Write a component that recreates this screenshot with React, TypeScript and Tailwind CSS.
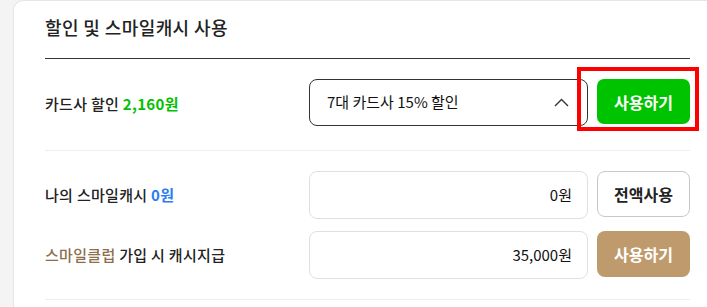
import React from "react";

const font = { fontFamily: '"Noto Sans CJK KR", "Noto Sans", sans-serif' };

export default function App() {
  return (
    <div
      className="relative w-[707px] h-[307px] overflow-hidden bg-[#f4f4f4] pl-[13px]"
      style={font}
    >
      <div className="h-full bg-white border-l border-t border-[#e6e6e6] rounded-tl-[10px] pl-[31px] pr-[17px]">
        <div className="h-[58px] border-b border-[#333333] flex items-center">
          <h2 className="text-[18px] font-medium text-[#222222] tracking-[0.4px] -mt-[4px]">
            할인 및 스마일캐시 사용
          </h2>
        </div>

        <div className="flex items-start justify-between pt-[20px] pb-[24px] border-b border-[#eeeeee]">
          <div className="h-[47px] flex items-center text-[15px] font-medium text-[#222222] tracking-[0.3px] pt-[3px]">
            <span>
              카드사 할인 <span className="font-bold text-[#00c200]">2,160원</span>
            </span>
          </div>
          <div className="flex items-start gap-[9px]">
            <div className="w-[279px] h-[47px] rounded-[8px] border border-[#333333] flex items-center justify-between pl-[17px] pr-[18px]">
              <span className="text-[15px] text-[#111111]">7대 카드사 15% 할인</span>
              <svg width="15" height="9" viewBox="0 0 15 9" fill="none">
                <path d="M1 8 L7.5 1.5 L14 8" stroke="#333" strokeWidth="1.4" />
              </svg>
            </div>
            <button className="w-[93px] h-[45px] rounded-[7px] bg-[#00c300] text-white text-[16px] font-bold">
              사용하기
            </button>
          </div>
        </div>

        <div className="flex justify-between pt-[20px] pb-[20px] border-b border-[#eeeeee]">
          <div className="flex flex-col">
            <div className="h-[48px] flex items-center text-[15px] font-medium text-[#222222] tracking-[0.3px]">
              <span>
                나의 스마일캐시 <span className="font-bold text-[#2b7cf6]">0원</span>
              </span>
            </div>
            <div className="h-[48px] mt-[12px] flex items-center text-[15px] font-medium text-[#222222] tracking-[0.3px]">
              <span>
                <span className="text-[#8d6e4d]">스마일클럽</span> 가입 시 캐시지급
              </span>
            </div>
          </div>
          <div className="flex flex-col gap-[12px]">
            <div className="flex items-start gap-[9px]">
              <div className="w-[279px] h-[48px] rounded-[8px] border border-[#e0e0e0] flex items-center justify-end pr-[15px] text-[15px] text-[#111111]">
                0원
              </div>
              <button className="w-[93px] h-[46px] rounded-[8px] border border-[#c8c8c8] bg-white text-[#222222] text-[16px] font-bold">
                전액사용
              </button>
            </div>
            <div className="flex items-start gap-[9px]">
              <div className="w-[279px] h-[48px] rounded-[8px] border border-[#e0e0e0] flex items-center justify-end pr-[15px] text-[15px] text-[#111111]">
                35,000원
              </div>
              <button className="w-[93px] h-[46px] rounded-[8px] bg-[#bf9a6c] text-white text-[16px] font-bold">
                사용하기
              </button>
            </div>
          </div>
        </div>
      </div>

      <div className="absolute left-[577px] top-[67px] w-[122px] h-[64px] border-[4px] border-[#ff0000] pointer-events-none" />
    </div>
  );
}
